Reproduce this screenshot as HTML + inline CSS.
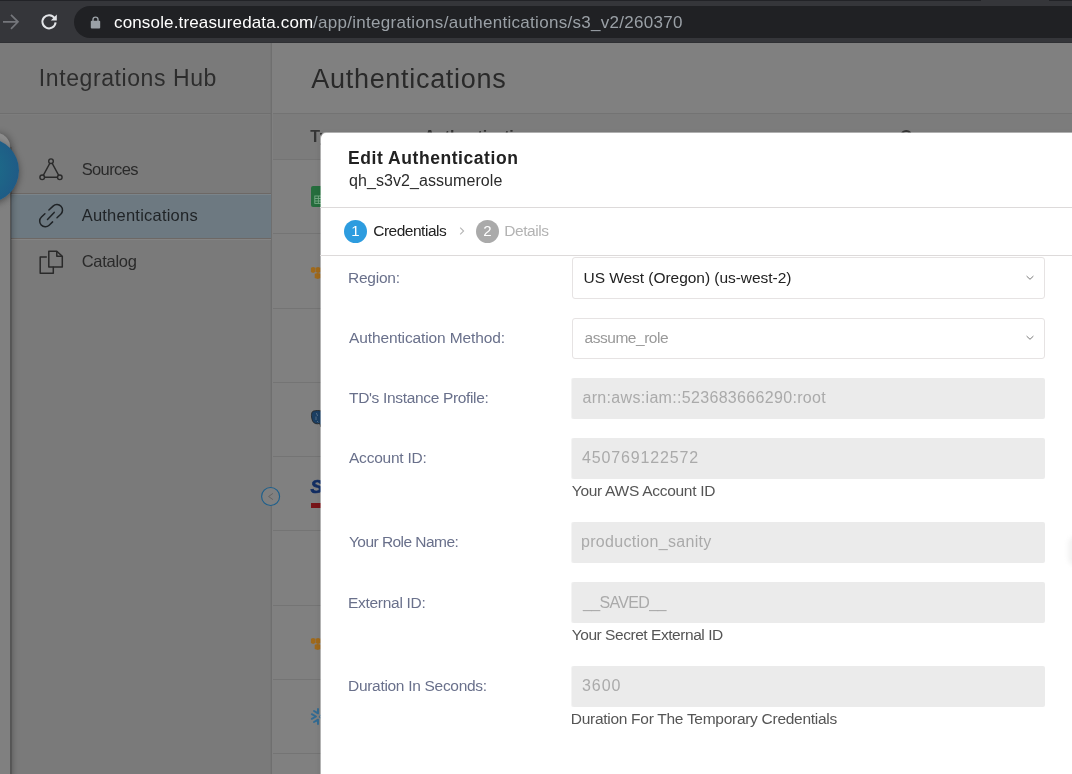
<!DOCTYPE html>
<html>
<head>
<meta charset="utf-8">
<title>Authentications</title>
<style>
*{box-sizing:border-box;margin:0;padding:0}
html,body{width:1072px;height:774px;overflow:hidden;background:#808080;font-family:"Liberation Sans",sans-serif;}
body{position:relative}
.layer{position:absolute;left:0;top:0;width:1072px;height:774px;overflow:hidden;will-change:transform}
.t{position:absolute;white-space:pre;line-height:1}
.b{position:absolute}
/* browser chrome */
#chrome{position:absolute;left:0;top:0;width:1072px;height:43px;overflow:hidden;will-change:transform}
#chromebg{position:absolute;left:0;top:0;width:1072px;height:43px;background:#35363a}
#pill{position:absolute;left:74px;top:6px;width:1100px;height:32px;border-radius:16px;background:#202124}
/* page */
.row{position:absolute;left:273px;width:800px;height:1px;background:#747474}
.inp{position:absolute;left:572px;width:473px;height:41px;border-radius:2px;background:#ebebeb;box-shadow:-1px 0 0 #f4f4f4}
.sel{position:absolute;left:572px;width:473px;height:41px;border-radius:3px;background:#fff;border:1px solid #e6e3e3}
</style>
</head>
<body>
<!-- dimmed page -->
<div class="layer" id="page">
  <div class="b" style="left:0;top:43px;width:271px;height:731px;background:#7a7a7a"></div>
  <div class="b" style="left:270px;top:43px;width:1px;height:731px;background:#767676"></div>
  <div class="b" style="left:271px;top:43px;width:1px;height:731px;background:#6f6f6f"></div>
  <div class="b" style="left:0;top:113px;width:271px;height:1px;background:#6f6f6f"></div>
  <div class="b" style="left:0;top:114px;width:270px;height:1px;background:#7d7d7d"></div>
  <div class="b" style="left:273px;top:113px;width:800px;height:1px;background:#737373"></div>
  <div class="b" style="left:273px;top:114px;width:800px;height:45px;background:#7c7c7c"></div>
  <!-- selected nav -->
  <div class="b" style="left:11px;top:193px;width:260px;height:46px;background:#6d7981;border-top:1px solid #6d6865;border-bottom:1px solid #6d6865;box-shadow:inset 0 1px 0 #7b848a, 0 1px 0 #848484"></div>
  <!-- left rail -->
  <div class="b" style="left:-40px;top:132.6px;width:50.4px;height:700px;border-top-right-radius:14px;background:linear-gradient(180deg,#8d8d8d 0,#8d8d8d 18px,#808080 75px);box-shadow:2px 0 7px rgba(0,0,0,.3)"></div>
  <div class="b" style="left:10.4px;top:147px;width:1.5px;height:640px;background:rgba(0,0,0,.13)"></div>
  <div class="b" style="left:-46.4px;top:138.1px;width:65px;height:65px;border-radius:50%;background:radial-gradient(circle at 40% 48%,#1f7589 0%,#1d6888 35%,#1f5b86 75%,#1f5583 100%);box-shadow:0 2px 7px rgba(0,0,0,.4)"></div>
  <!-- nav icons -->
  <svg class="b" style="left:38px;top:157px" width="26" height="25" viewBox="0 0 26 25" fill="none" stroke="#2a2a2a" stroke-width="1.4">
    <circle cx="13" cy="4.2" r="2.3"/><circle cx="4.2" cy="20.3" r="2.3"/><circle cx="21.8" cy="20.3" r="2.3"/>
    <path d="M11.9 6.2 L5.3 18.3 M14.1 6.2 L20.7 18.3 M6.5 20.3 H19.5"/>
  </svg>
  <svg class="b" style="left:38px;top:203px" width="26" height="26" viewBox="0 0 26 26" fill="none" stroke="#1f2326" stroke-width="1.5" stroke-linecap="round">
    <path d="M10.9 7 L15.06 3.12 A5.6 5.6 0 0 1 22.74 11.28 L19 14.8"/>
    <path d="M6.9 10.8 L3.46 14.02 A5.6 5.6 0 0 0 11.14 22.18 L14.6 18.9"/>
    <path d="M9.5 16.4 L16.2 9.4"/>
  </svg>
  <svg class="b" style="left:38px;top:249px" width="26" height="27" viewBox="0 0 26 27" fill="none" stroke="#2a2a2a" stroke-width="1.5" stroke-linejoin="round">
    <path d="M10.8 2.3 H18.8 L24.3 7.3 V18.1 H10.8 Z"/><path d="M18.8 2.5 V7.3 H24.1"/>
    <path d="M8.3 7.9 H2.2 V24.3 H15.3 V18.3" stroke-linecap="round"/>
  </svg>
  <!-- table rows -->
  <div class="row" style="top:159px"></div>
  <div class="row" style="top:233px"></div>
  <div class="row" style="top:308px"></div>
  <div class="row" style="top:382px"></div>
  <div class="row" style="top:456px"></div>
  <div class="row" style="top:530px"></div>
  <div class="row" style="top:605px"></div>
  <div class="row" style="top:679px"></div>
  <div class="row" style="top:753px"></div>
  <!-- row icons (clipped by modal) -->
  <svg class="b" style="left:311px;top:186px" width="18" height="21" viewBox="0 0 18 21"><rect x="0" y="0" width="18" height="21" rx="2" fill="#256d3d"/><g fill="none" stroke="#79ad88" stroke-width="0.9"><rect x="3.8" y="10" width="10.4" height="7.4"/><path d="M3.8 12.5 H14.2 M3.8 15 H14.2 M7.4 10 V17.4"/></g></svg>
  <svg class="b aws" style="left:310px;top:266px" width="16" height="14" viewBox="0 0 16 14" fill="#9f691b"><path d="M3.1 1 L5.4 1.7 V6 L3.1 6.9 L0.9 6 V1.7 Z"/><path d="M8 1 L10.4 1.7 V6 L8 6.9 L5.7 6 V1.7 Z"/><path d="M13 1 L15.3 1.7 V6 L13 6.9 L10.7 6 V1.7 Z"/><path d="M7.7 6.9 L10.6 7.8 V12 L7.7 13 L4.7 12 V7.8 Z"/></svg>
  <svg class="b" style="left:310px;top:410px" width="16" height="18" viewBox="0 0 16 18"><path d="M3 1.2 C6 0.2 9 0.4 12 1 C14.5 1.8 15 5 14.4 8 C14 11 13.4 13.6 11.6 14 L11 17 L9.6 13.4 C7 14.4 3.6 13.6 2.6 11 C1.4 8 0.6 3 3 1.2 Z" fill="#1c3f62" stroke="#222" stroke-width="0.8"/><path d="M6.4 3 L7.6 6 M6 6.5 V10 M7 11 L8.4 12.4" stroke="#6f8196" stroke-width="0.7" fill="none"/></svg>
  <div class="t" style="left:310.4px;top:478.2px;font-size:18.5px;font-weight:bold;font-style:italic;color:#122d62;-webkit-text-stroke:0.7px #122d62">S</div>
  <div class="b" style="left:311px;top:503px;width:14px;height:5px;background:#771418"></div>
  <svg class="b aws" style="left:310px;top:637px" width="16" height="14" viewBox="0 0 16 14" fill="#9f691b"><path d="M3.1 1 L5.4 1.7 V6 L3.1 6.9 L0.9 6 V1.7 Z"/><path d="M8 1 L10.4 1.7 V6 L8 6.9 L5.7 6 V1.7 Z"/><path d="M13 1 L15.3 1.7 V6 L13 6.9 L10.7 6 V1.7 Z"/><path d="M7.7 6.9 L10.6 7.8 V12 L7.7 13 L4.7 12 V7.8 Z"/></svg>
  <svg class="b" style="left:310px;top:707px" width="14" height="19" viewBox="0 0 14 19" fill="none" stroke="#316a92" stroke-width="1.9" stroke-linecap="round" stroke-linejoin="round"><path d="M8 1.9 V6.4 L4 4"/><path d="M8 17.1 V12.6 L4 15"/><path d="M1.8 7.2 L6 9.5 L1.8 11.8"/><path d="M9.2 9.5 L10.6 8.4 L12 9.5 L10.6 10.6 Z" stroke-width="1"/></svg>
  <!-- collapse button -->
  <svg class="b" style="left:260px;top:486px" width="22" height="22" viewBox="0 0 22 22" fill="none">
    <circle cx="10.6" cy="10.5" r="9" fill="#808080" stroke="#1c5f8c" stroke-width="1.15"/>
    <path d="M12.9 7.4 L8.6 10.5 L12.9 13.6" stroke="#5a5a5a" stroke-width="0.8"/>
  </svg>
<div class="t" style="left:38.80px;top:67.20px;font-size:23px;letter-spacing:0.588px;color:#2d2d2d;">Integrations Hub</div>
<div class="t" style="left:311.30px;top:65.50px;font-size:27px;letter-spacing:0.698px;color:#292929;">Authentications</div>
<div class="t" style="left:81.70px;top:160.80px;font-size:16.5px;letter-spacing:-0.630px;color:#2a2a2a;">Sources</div>
<div class="t" style="left:81.70px;top:206.90px;font-size:16.5px;letter-spacing:0.223px;color:#1f2326;">Authentications</div>
<div class="t" style="left:81.70px;top:253.20px;font-size:16.5px;letter-spacing:-0.283px;color:#2a2a2a;">Catalog</div>
<div class="t" style="left:310.30px;top:128.50px;font-size:16px;letter-spacing:0.814px;color:#353535;font-weight:bold;">Type</div>
<div class="t" style="left:424.00px;top:128.50px;font-size:16px;letter-spacing:-0.248px;color:#353535;font-weight:bold;">Authentication</div>
<div class="t" style="left:900.00px;top:128.50px;font-size:16px;letter-spacing:0.109px;color:#353535;font-weight:bold;">Owner</div>
</div>
<!-- modal -->
<div class="layer" id="modal">
    <div class="b" style="left:320px;top:132px;width:800px;height:700px;background:rgba(255,255,255,.4);border-radius:6px 0 0 0;box-shadow:-1px 1px 5px rgba(0,0,0,.07)"></div>
  <div class="b" style="left:321px;top:133px;width:800px;height:700px;background:#fff;border-radius:5px 0 0 0"></div>
  <div class="b" style="left:320px;top:207px;width:800px;height:1px;background:#dddada"></div>
  <div class="b" style="left:320px;top:255px;width:800px;height:1px;background:#dddada"></div>
  <!-- steps -->
  <div class="b" style="left:344px;top:220px;width:23px;height:23px;border-radius:50%;background:#2d9cdf"></div>
  <div class="t" style="left:344px;top:223px;width:23px;text-align:center;font-size:15px;color:#fff">1</div>
  <div class="b" style="left:476px;top:220px;width:23px;height:23px;border-radius:50%;background:#aaaaaa"></div>
  <div class="t" style="left:476px;top:223px;width:23px;text-align:center;font-size:15px;color:#fff">2</div>
  <svg class="b" style="left:457px;top:225px" width="10" height="12" viewBox="0 0 10 12" fill="none" stroke="#b5b5b5" stroke-width="1.1"><path d="M3.2 2.6 L6.6 6 L3.2 9.4"/></svg>
  <!-- fields -->
  <div class="sel" style="top:257px;height:42px"></div>
  <div class="sel" style="top:318px"></div>
  <div class="inp" style="top:378px"></div>
  <div class="inp" style="top:438px"></div>
  <div class="inp" style="top:522px"></div>
  <div class="inp" style="top:582px"></div>
  <div class="inp" style="top:666px"></div>
  <svg class="b" style="left:1025px;top:273px" width="10" height="10" viewBox="0 0 10 10" fill="none" stroke="#6a6a6a" stroke-width="0.9"><path d="M1.6 3.1 L5 6.3 L8.4 3.1"/></svg>
  <svg class="b" style="left:1025px;top:333px" width="10" height="10" viewBox="0 0 10 10" fill="none" stroke="#6a6a6a" stroke-width="0.9"><path d="M1.6 3.1 L5 6.3 L8.4 3.1"/></svg>
  <div class="b" style="left:1068px;top:536px;width:20px;height:30px;border-radius:8px;background:#f3f3f3;filter:blur(2px)"></div>
<div class="t" style="left:348.00px;top:149.90px;font-size:17.5px;letter-spacing:0.560px;color:#222;font-weight:bold;">Edit Authentication</div>
<div class="t" style="left:349.00px;top:173.40px;font-size:16px;letter-spacing:0.071px;color:#2b2b2b;">qh_s3v2_assumerole</div>
<div class="t" style="left:373.20px;top:222.50px;font-size:15.5px;letter-spacing:-0.485px;color:#222;">Credentials</div>
<div class="t" style="left:504.20px;top:222.50px;font-size:15.5px;letter-spacing:-0.438px;color:#b3b3b3;">Details</div>
<div class="t" style="left:348.00px;top:269.50px;font-size:15.5px;letter-spacing:-0.228px;color:#69708b;">Region:</div>
<div class="t" style="left:349.00px;top:330.00px;font-size:15.5px;letter-spacing:-0.119px;color:#69708b;">Authentication Method:</div>
<div class="t" style="left:349.00px;top:390.00px;font-size:15.5px;letter-spacing:-0.334px;color:#69708b;">TD's Instance Profile:</div>
<div class="t" style="left:349.00px;top:450.25px;font-size:15.5px;letter-spacing:-0.231px;color:#69708b;">Account ID:</div>
<div class="t" style="left:349.00px;top:534.00px;font-size:15.5px;letter-spacing:-0.547px;color:#69708b;">Your Role Name:</div>
<div class="t" style="left:348.00px;top:595.00px;font-size:15.5px;letter-spacing:-0.288px;color:#69708b;">External ID:</div>
<div class="t" style="left:348.00px;top:678.00px;font-size:15.5px;letter-spacing:-0.300px;color:#69708b;">Duration In Seconds:</div>
<div class="t" style="left:583.50px;top:269.50px;font-size:15.5px;letter-spacing:-0.041px;color:#222;">US West (Oregon) (us-west-2)</div>
<div class="t" style="left:584.50px;top:330.00px;font-size:15.5px;letter-spacing:-0.462px;color:#999;">assume_role</div>
<div class="t" style="left:582.50px;top:390.00px;font-size:16px;letter-spacing:0.319px;color:#aaaaaa;">arn:aws:iam::523683666290:root</div>
<div class="t" style="left:582.00px;top:450.25px;font-size:16px;letter-spacing:0.852px;color:#aaaaaa;">450769122572</div>
<div class="t" style="left:581.00px;top:534.00px;font-size:16px;letter-spacing:0.302px;color:#aaaaaa;">production_sanity</div>
<div class="t" style="left:583.00px;top:594.50px;font-size:16px;letter-spacing:-0.656px;color:#aaaaaa;">__SAVED__</div>
<div class="t" style="left:582.00px;top:678.00px;font-size:16px;letter-spacing:0.935px;color:#aaaaaa;">3600</div>
<div class="t" style="left:571.75px;top:483.25px;font-size:15.5px;letter-spacing:-0.279px;color:#555;">Your AWS Account ID</div>
<div class="t" style="left:571.75px;top:627.25px;font-size:15.5px;letter-spacing:-0.452px;color:#555;">Your Secret External ID</div>
<div class="t" style="left:570.75px;top:710.50px;font-size:15.5px;letter-spacing:-0.281px;color:#555;">Duration For The Temporary Credentials</div>
</div>
<!-- browser chrome -->
<div id="chromebg"></div>
<div id="chrome">
  <div class="b" style="left:0;top:0;height:1px;width:981px;background:#222327"></div>
  <div class="b" style="left:1049px;top:0;height:1px;width:23px;background:#222327"></div>
  <div id="pill"></div>
  <svg class="b" style="left:1.4px;top:12px" width="20" height="20" viewBox="0 0 20 20" fill="none" stroke="#74767b" stroke-width="1.7"><path d="M2 9.8 H16.4 M10 2.8 L17 9.8 L10 16.8"/></svg>
  <svg class="b" style="left:39px;top:12px" width="20" height="20" viewBox="0 0 20 20" fill="none"><path d="M15.6 6.2 A6.6 6.6 0 1 0 16.6 10.4" stroke="#e3e5e8" stroke-width="2"/><path d="M17.8 2.6 V8.6 H11.8 Z" fill="#e3e5e8"/></svg>
  <svg class="b" style="left:89px;top:15px" width="13" height="15" viewBox="0 0 13 15" fill="none"><rect x="1.8" y="5.8" width="9.4" height="7.6" rx="1" fill="#9aa0a6"/><path d="M4 6 V4.6 a2.5 2.5 0 0 1 5 0 V6" stroke="#9aa0a6" stroke-width="1.4"/></svg>
<div class="t" style="left:114.00px;top:13.90px;font-size:17px;letter-spacing:0.154px;color:#ffffff;">console.treasuredata.com</div>
<div class="t" style="left:313.00px;top:13.90px;font-size:17px;letter-spacing:0.292px;color:#9aa0a6;">/app/integrations/authentications/s3_v2/260370</div>
  <div class="b" style="left:0;top:42px;height:1px;width:1072px;background:#2f3034"></div>
</div>
</body>
</html>
